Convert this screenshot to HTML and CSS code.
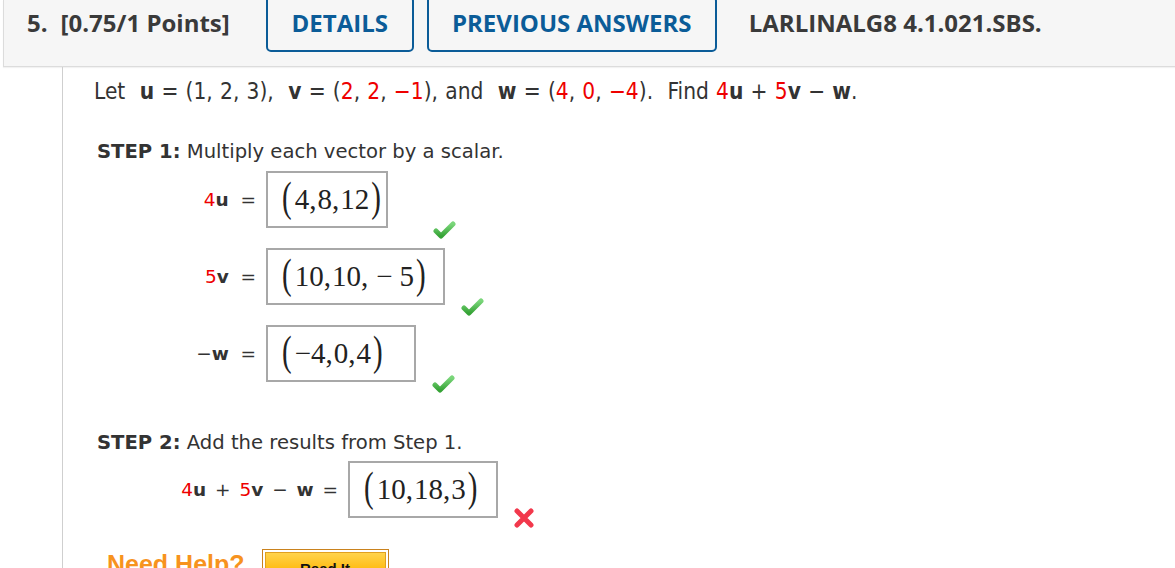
FILE: index.html
```html
<!DOCTYPE html>
<html>
<head>
<meta charset="utf-8">
<link rel="stylesheet" href="styles.css">
</head>
<body>
<div class="page">
  <div class="header">
    <div class="qnum">5.</div>
    <div class="points">[0.75/1 Points]</div>
    <div class="hbtn details">DETAILS</div>
    <div class="hbtn prev">PREVIOUS ANSWERS</div>
    <div class="code">LARLINALG8 4.1.021.SBS.</div>
  </div>
  <div class="content">
    <p class="intro">Let &nbsp;<b>u</b> = (1, 2, 3), &nbsp;<b>v</b> = (<span class="r">2</span>, <span class="r">2</span>, <span class="r">−1</span>), and &nbsp;<b>w</b> = (<span class="r">4</span>, <span class="r">0</span>, <span class="r">−4</span>). &nbsp;Find <span class="r">4</span><b>u</b> + <span class="r">5</span><b>v</b> − <b>w</b>.</p>

    <p class="step step1"><b>STEP 1:</b> Multiply each vector by a scalar.</p>

    <div class="row">
      <div class="label"><span class="r">4</span><b>u</b> &nbsp;=</div>
      <div class="mbox mb1"><span class="p">(</span>4,<span class="c"></span>8,<span class="c"></span>12<span class="p">)</span></div>
      <svg class="mark check ck1" viewBox="0 0 24 20"><use href="#chk"/></svg>
    </div>
    <div class="row">
      <div class="label"><span class="r">5</span><b>v</b> &nbsp;=</div>
      <div class="mbox mb2"><span class="p">(</span>10,<span class="c"></span>10,<span class="c"></span><span class="bin">−</span>5<span class="p">)</span></div>
      <svg class="mark check" viewBox="0 0 24 20"><use href="#chk"/></svg>
    </div>
    <div class="row">
      <div class="label">−<b>w</b> &nbsp;=</div>
      <div class="mbox mb3"><span class="p">(</span>−4,<span class="c"></span>0,<span class="c"></span>4<span class="p">)</span></div>
      <svg class="mark check" viewBox="0 0 24 20"><use href="#chk"/></svg>
    </div>

    <p class="step step2"><b>STEP 2:</b> Add the results from Step 1.</p>

    <div class="row row2">
      <div class="label wide"><span class="r">4</span><b>u</b> + <span class="r">5</span><b>v</b> − <b>w</b> =</div>
      <div class="mbox mb4"><span class="p">(</span>10,<span class="c"></span>18,<span class="c"></span>3<span class="p">)</span></div>
      <svg class="mark cross" viewBox="0 0 22 22">
        <path d="M4 4 L18 18 M18 4 L4 18" stroke="#f2384c" stroke-width="5" stroke-linecap="round" fill="none"/>
      </svg>
    </div>

    <div class="help">
      <span class="need">Need Help?</span>
      <span class="readit"><span class="readit-in">Read It</span></span>
    </div>
  </div>
</div>
<svg width="0" height="0" class="defs">
  <defs>
    <linearGradient id="g" x1="0" y1="0" x2="0" y2="1">
      <stop offset="0" stop-color="#7ad67a"/>
      <stop offset="1" stop-color="#36a336"/>
    </linearGradient>
    <symbol id="chk" viewBox="0 0 24 20">
      <path d="M4 11 L9 16 L21 4" stroke="url(#g)" stroke-width="5" stroke-linecap="round" stroke-linejoin="round" fill="none"/>
    </symbol>
  </defs>
</svg>
</body>
</html>
```

FILE: styles.css
```css
html, body {
  margin: 0;
  padding: 0;
  background: #fff;
  overflow: hidden;
}
.page {
  width: 1175px;
  height: 568px;
  overflow: hidden;
  font-family: "DejaVu Sans", Verdana, sans-serif;
  color: #333;
}
.defs { position: absolute; }

/* header */
.header {
  display: flex;
  align-items: flex-start;
  height: 66px;
  margin-left: 3px;
  background: #f6f6f6;
  border-left: 1px solid #dcdcdc;
  border-bottom: 1px solid #dcdcdc;
  box-shadow: 0 1px 1px rgba(0,0,0,0.05);
  padding-left: 23px;
  font-family: "Open Sans", "Liberation Sans", sans-serif;
  font-weight: 700;
  font-size: 24px;
  color: #3a3a3a;
}
.qnum, .points, .code {
  line-height: 30px;
  padding-top: 8px;
}
.points { margin-left: 13px; }
.hbtn {
  box-sizing: border-box;
  margin-top: -4px;
  height: 56px;
  border: 2px solid #0b5c98;
  border-radius: 5px;
  color: #0b5c98;
  line-height: 30px;
  padding-top: 10px;
  text-align: center;
}
.details { width: 148px; margin-left: 36px; }
.prev { width: 290px; margin-left: 13px; }
.code { margin-left: 32px; }

/* content */
.content {
  margin-left: 62px;
  border-left: 1px solid #cfcfcf;
  padding-left: 31px;
  padding-top: 12px;
  height: 600px;
}
.intro {
  margin: 0;
  font-family: "DejaVu Sans Condensed", "DejaVu Sans", sans-serif;
  font-stretch: condensed;
  font-size: 22.5px;
  line-height: 24px;
  word-spacing: 0.8px;
  color: #333;
}
.intro b { color: #333; }
.r { color: #ee0000; }
.step {
  margin: 37px 0 7px 3px;
  font-size: 19.6px;
  line-height: 24px;
}
.step2 { margin-top: 49px; margin-bottom: 6px; }

.row {
  display: flex;
  align-items: center;
  margin-bottom: 20px;
}
.label {
  width: 162px;
  text-align: right;
  font-size: 18.5px;
  margin-right: 10px;
  white-space: nowrap;
}
.label.wide { width: 244px; word-spacing: 3px; }
.mbox {
  box-sizing: border-box;
  height: 57px;
  border: 2px solid #a8a8a8;
  display: flex;
  align-items: center;
  padding-left: 12px;
  font-family: "Liberation Serif", "Times New Roman", serif;
  font-size: 29px;
  color: #222;
  white-space: nowrap;
}
.mb1 { width: 122px; }
.mb2 { width: 179px; }
.mb3 { width: 150px; }
.mb4 { width: 150px; }
.p {
  display: inline-block;
  font-size: 29px;
  transform: scaleY(1.45);
  line-height: 1;
  margin: 0 3px 0 2px;
  position: relative;
  top: -2px;
}
.c { display: inline-block; width: 1px; }
.bin { margin: 0 7px; }

.mark {
  align-self: flex-end;
  margin-bottom: -12px;
}
.check { width: 24px; height: 20px; margin-left: 15px; }
.ck1 { margin-left: 44px; }
.cross { width: 22px; height: 22px; margin-left: 15px; margin-bottom: -11px; }

/* help */
.help {
  display: flex;
  align-items: flex-start;
  margin-top: 31px;
  margin-left: 13px;
}
.need {
  font-family: "Liberation Sans", Arial, sans-serif;
  font-weight: 700;
  font-size: 25px;
  color: #f7931e;
  line-height: 24px;
  padding-top: 3px;
}
.readit {
  margin-left: 17px;
  width: 127px;
  height: 30px;
  box-sizing: border-box;
  border: 1px solid #c9821e;
  background: #fff;
  padding: 2px;
}
.readit-in {
  display: block;
  height: 100%;
  border: 1px solid #e0a020;
  background: linear-gradient(#ffd34d, #ffb400);
  text-align: center;
  font-family: "Liberation Sans", Arial, sans-serif;
  font-weight: 700;
  font-size: 15px;
  color: #111;
  line-height: 20px;
  padding-top: 6px;
  box-sizing: border-box;
}
```
